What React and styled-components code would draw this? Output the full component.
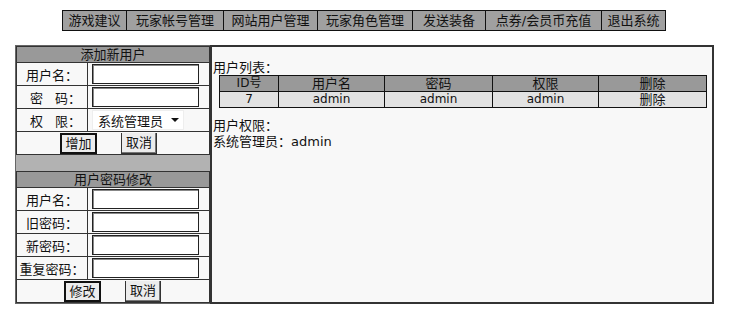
import React from "react";
import styled, { createGlobalStyle } from "styled-components";

const Global = createGlobalStyle`
  html, body { margin: 0; padding: 0; background: #ffffff; }
  body {
    font-family: "DejaVu Sans", "Noto Sans CJK SC", sans-serif;
    font-size: 12px;
    color: #111;
  }
`;

const Page = styled.div`
  width: 733px;
  padding-top: 10px;
`;

const Nav = styled.nav`
  display: flex;
  margin-left: 62px;
  width: fit-content;
  border: 1px solid #111;
  background: #a0a0a0;
`;

const NavItem = styled.div`
  width: ${(p) => p.$w}px;
  height: 19px;
  line-height: 19px;
  text-align: center;
  font-size: 13px;
  color: #111;
  border-left: ${(p) => (p.$first ? "none" : "1px solid #111")};
  box-sizing: border-box;
`;

const Main = styled.div`
  display: flex;
  margin: 14px 0 0 15px;
  width: 699px;
  height: 259px;
`;

const Side = styled.div`
  width: 195px;
  display: flex;
  flex-direction: column;
  border: 1px solid #666;
  border-right: none;
  box-sizing: border-box;
  background: #b2b2b2;
`;

const Section = styled.div`
  display: flex;
  flex-direction: column;
  border: 1px solid #333;
  background: #f8f8f8;
`;

const SectionTitle = styled.div`
  height: 15px;
  line-height: 15px;
  background: #999;
  text-align: center;
  font-size: 13px;
  border-bottom: 1px solid #333;
`;

const Row = styled.div`
  display: grid;
  grid-template-columns: 71px 1fr;
  height: 22px;
  border-bottom: 1px solid #333;
`;

const Label = styled.div`
  border-right: 1px solid #333;
  display: flex;
  align-items: center;
  justify-content: ${(p) => (p.$spread ? "flex-start" : "center")};
  padding-left: ${(p) => (p.$spread ? "13px" : "0")};
  gap: ${(p) => (p.$spread ? "12px" : "0")};
  font-size: 13px;
  white-space: nowrap;
`;

const Field = styled.div`
  display: flex;
  align-items: center;
  padding-left: 4px;
`;

const Input = styled.input`
  width: 107px;
  height: 20px;
  box-sizing: border-box;
  border: 1px solid #222;
  box-shadow: inset 1px 1px 0 #888;
  background: #fff;
  margin: 0;
  padding: 0 2px;
`;

const Select = styled.div`
  width: 92px;
  height: 20px;
  box-sizing: border-box;
  background: #fff;
  display: flex;
  align-items: center;
  justify-content: space-between;
  padding: 0 4px 0 5px;
  font-size: 13px;
  border: 1px solid #eee;
`;

const Arrow = styled.span`
  width: 0;
  height: 0;
  border-left: 4px solid transparent;
  border-right: 4px solid transparent;
  border-top: 4px solid #111;
`;

const ButtonRow = styled.div`
  display: flex;
  align-items: flex-end;
  height: 22px;
  padding-left: ${(p) => p.$pad}px;
  gap: 24px;
`;

const Button = styled.button`
  width: ${(p) => (p.$primary ? 37 : 36)}px;
  height: 21px;
  box-sizing: border-box;
  margin: 0;
  padding: 0;
  font-family: inherit;
  font-size: 13px;
  line-height: 16px;
  color: #111;
  background: #ececec;
  border: ${(p) => (p.$primary ? "2px solid #111" : "1px solid #333")};
  border-top: ${(p) => (p.$primary ? "2px solid #111" : "none")};
  box-shadow: ${(p) => (p.$primary ? "none" : "inset -1px -1px 0 #777")};
`;

const Gap = styled.div`
  height: 17px;
  background: #b2b2b2;
`;

const Content = styled.div`
  flex: 1;
  border: 2px solid #333;
  background: #f8f8f8;
  padding: 14px 0 0 1px;
  font-size: 13px;
  line-height: 16px;
`;

const Caption = styled.div`
  height: 14px;
  line-height: 14px;
`;

const Table = styled.div`
  display: grid;
  grid-template-columns: 58px 106px 108px 106px 1fr;
  width: 488px;
  margin-left: 6px;
  border: 1px solid #111;
  box-sizing: border-box;
  margin-bottom: 10px;
`;

const Cell = styled.div`
  height: 15px;
  line-height: 15px;
  text-align: center;
  font-size: ${(p) => (p.$latin ? "12px" : "13px")};
  background: ${(p) => (p.$head ? "#999" : "#e2e2e2")};
  border-left: ${(p) => (p.$first ? "none" : "1px solid #111")};
  border-bottom: ${(p) => (p.$head ? "1px solid #111" : "none")};
`;

const Line = styled.div`
  height: 16px;
  line-height: 16px;
`;

const navItems = [
  ["游戏建议", 63],
  ["玩家帐号管理", 97],
  ["网站用户管理", 94],
  ["玩家角色管理", 95],
  ["发送装备", 73],
  ["点券/会员币充值", 116],
  ["退出系统", 64],
];

export default function App() {
  return (
    <>
      <Global />
      <Page>
        <Nav>
          {navItems.map(([t, w], i) => (
            <NavItem key={t} $w={w} $first={i === 0}>
              {t}
            </NavItem>
          ))}
        </Nav>
        <Main>
          <Side>
            <Section>
              <SectionTitle>添加新用户</SectionTitle>
              <Row>
                <Label>用户名：</Label>
                <Field>
                  <Input />
                </Field>
              </Row>
              <Row>
                <Label $spread>
                  <span>密</span>
                  <span>码：</span>
                </Label>
                <Field>
                  <Input type="password" />
                </Field>
              </Row>
              <Row>
                <Label $spread>
                  <span>权</span>
                  <span>限：</span>
                </Label>
                <Field>
                  <Select>
                    系统管理员
                    <Arrow />
                  </Select>
                </Field>
              </Row>
              <ButtonRow $pad={43}>
                <Button $primary>增加</Button>
                <Button>取消</Button>
              </ButtonRow>
            </Section>
            <Gap />
            <Section>
              <SectionTitle>用户密码修改</SectionTitle>
              <Row>
                <Label>用户名：</Label>
                <Field>
                  <Input />
                </Field>
              </Row>
              <Row>
                <Label>旧密码：</Label>
                <Field>
                  <Input type="password" />
                </Field>
              </Row>
              <Row>
                <Label>新密码：</Label>
                <Field>
                  <Input type="password" />
                </Field>
              </Row>
              <Row>
                <Label>重复密码：</Label>
                <Field>
                  <Input type="password" />
                </Field>
              </Row>
              <ButtonRow $pad={47}>
                <Button $primary>修改</Button>
                <Button>取消</Button>
              </ButtonRow>
            </Section>
          </Side>
          <Content>
            <Caption>用户列表：</Caption>
            <Table>
              <Cell $head $first $latin>ID号</Cell>
              <Cell $head>用户名</Cell>
              <Cell $head>密码</Cell>
              <Cell $head>权限</Cell>
              <Cell $head>删除</Cell>
              <Cell $first $latin>7</Cell>
              <Cell $latin>admin</Cell>
              <Cell $latin>admin</Cell>
              <Cell $latin>admin</Cell>
              <Cell>删除</Cell>
            </Table>
            <Line>用户权限：</Line>
            <Line>系统管理员：admin</Line>
          </Content>
        </Main>
      </Page>
    </>
  );
}
